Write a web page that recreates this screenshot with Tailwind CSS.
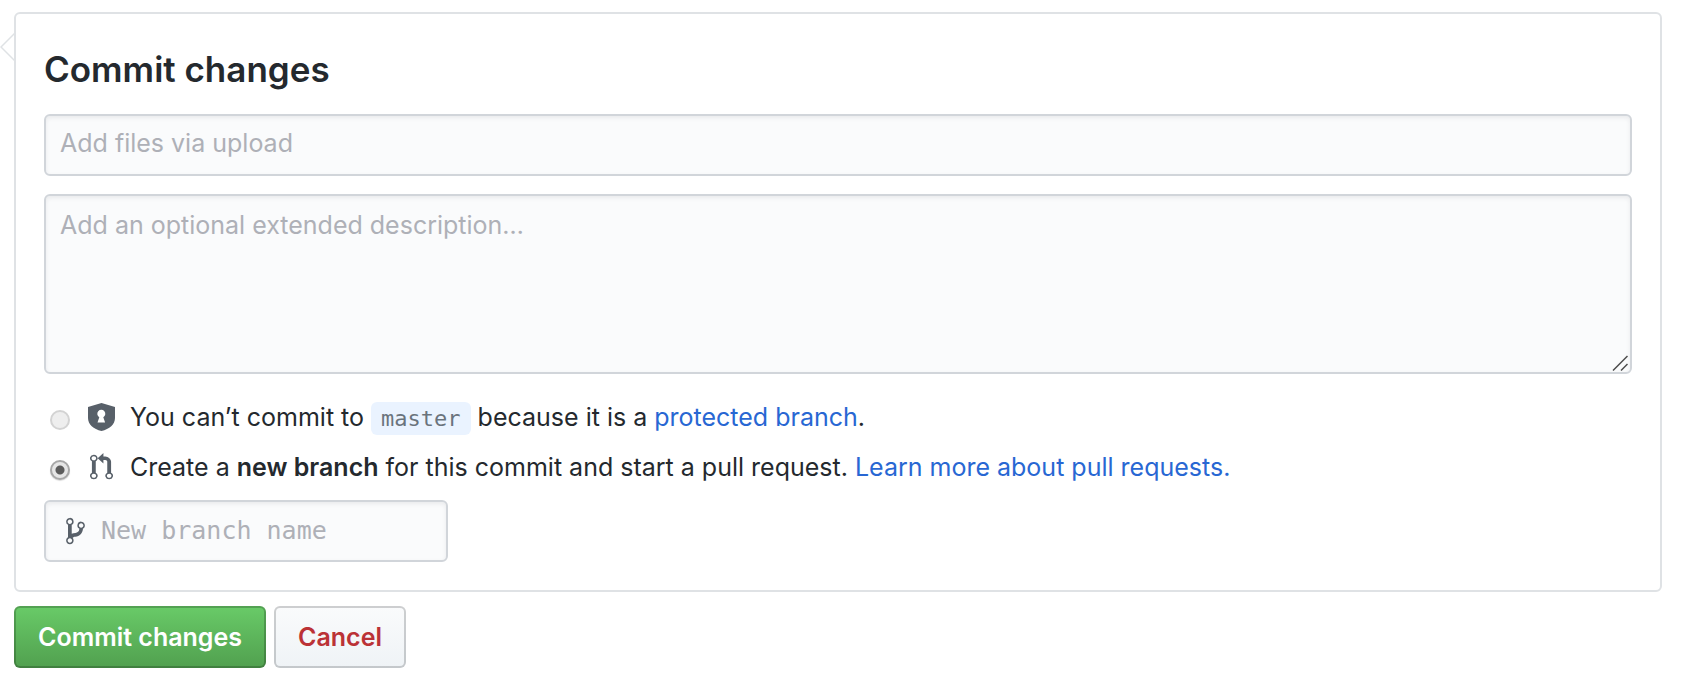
<!DOCTYPE html>
<html lang="en">
<head>
<meta charset="utf-8">
<meta name="viewport" content="width=device-width, initial-scale=1">
<title>Commit changes</title>
<script src="https://cdn.jsdelivr.net/npm/@tailwindcss/browser@4"></script>
</head>
<body class="bg-white font-['Inter',sans-serif] text-[25px] leading-[38px] text-[#24292e]">
<form class="pt-3 pr-5 pb-5 pl-3.5">
  <section class="relative rounded-md border-2 border-[#dfe2e5] px-7 pt-[35px] pb-7">
    <svg class="absolute top-[17px] -left-4 h-[32px] w-4" viewBox="0 0 16 32" fill="none" stroke="#dfe2e5" stroke-width="1.5" aria-hidden="true"><path d="M16 1 1 16l15 15"/></svg>
    <h1 class="mb-[25px] text-[35px] leading-10 font-semibold">Commit changes</h1>
    <input type="text" aria-label="Commit summary" placeholder="Add files via upload" class="block h-[62px] w-full rounded-md border-2 border-[#d1d5da] bg-[#fafbfc] px-3.5 pb-1 shadow-[inset_0_2px_4px_rgba(27,31,35,0.075)] placeholder:text-[#aeb0b7]">
    <div class="relative mt-[18px]">
      <textarea aria-label="Extended description" placeholder="Add an optional extended description…" class="block h-[180px] w-full resize-none rounded-md border-2 border-[#d1d5da] bg-[#fafbfc] px-3.5 py-2.5 shadow-[inset_0_2px_4px_rgba(27,31,35,0.075)] placeholder:text-[#aeb0b7]"></textarea>
      <svg class="absolute right-1 bottom-[3px] h-4 w-4" viewBox="0 0 16 16" fill="none" stroke="#4d4d4d" stroke-width="1.5" aria-hidden="true"><path d="M1 15.500 15.500 1M9 15.500 15.500 9"/></svg>
    </div>
    <div class="mt-[18px] flex h-[50px] items-center">
      <input id="direct" type="radio" name="target" disabled class="mt-1.5 ml-1.5 size-5 shrink-0 appearance-none rounded-full border-2 border-[#d3d3d3] bg-[#eeeeee]">
      <span class="flex w-[60px] shrink-0 justify-center pl-0.5">
        <svg class="h-7 w-[27px]" viewBox="0 0 27 28" aria-hidden="true"><path fill="#586069" fill-rule="evenodd" d="M13.500 0 0 4v11c0 6.500 5.500 11 13.500 13C21.500 26 27 21.500 27 15V4L13.500 0ZM9.500 19.500l1.800-5.300a4 4 0 1 1 4 0l1.800 5.300H9.500Z"/></svg>
      </span>
      <label for="direct">You can’t commit to <code class="rounded-md bg-[#eaf3ff] px-2.5 py-1 font-['DejaVu_Sans_Mono',monospace] text-[22px] leading-7 text-[#6a737d]">master</code> because it is a <a href="#" class="text-[#2867d3]">protected branch</a>.</label>
    </div>
    <div class="flex h-[50px] items-center">
      <input id="branch" type="radio" name="target" checked class="mt-1.5 ml-1.5 size-5 shrink-0 appearance-none rounded-full border-2 border-[#a8a8a8] bg-[#e6e6e6] bg-[radial-gradient(circle,#5c5c5c_4px,transparent_5px)] shadow-[0_1px_1px_rgba(0,0,0,0.15)]">
      <span class="flex w-[60px] shrink-0 justify-center pl-0.5">
        <svg class="h-7 w-[23px]" viewBox="0 0 12 16" preserveAspectRatio="none" fill="#586069" aria-hidden="true"><path d="M11 11.280V5c-.03-.78-.34-1.470-.94-2.060C9.460 2.350 8.780 2.030 8 2H7V0L4 3l3 3V4h1c.27.02.48.11.69.31.21.2.3.42.31.69v6.280A1.993 1.993 0 0 0 10 15a1.993 1.993 0 0 0 1-3.720zm-1 2.920c-.66 0-1.200-.55-1.200-1.200 0-.65.55-1.200 1.200-1.200.65 0 1.200.55 1.200 1.200 0 .65-.55 1.200-1.200 1.200zM4 3c0-1.110-.89-2-2-2a1.993 1.993 0 0 0-1 3.720v6.560A1.993 1.993 0 0 0 2 15a1.993 1.993 0 0 0 1-3.720V4.720c.59-.34 1-.98 1-1.720zm-.8 10c0 .66-.55 1.200-1.200 1.200-.65 0-1.200-.55-1.200-1.200 0-.65.55-1.200 1.200-1.200.65 0 1.200.55 1.200 1.200zM2 4.200C1.340 4.200.8 3.650.8 3c0-.65.55-1.200 1.200-1.200.65 0 1.200.55 1.200 1.200 0 .65-.55 1.200-1.200 1.200z"/></svg>
      </span>
      <label for="branch">Create a <strong class="font-semibold">new branch</strong> for this commit and start a pull request. <a href="#" class="text-[#2867d3]">Learn more about pull requests.</a></label>
    </div>
    <div class="mt-2 flex h-[62px] w-[404px] items-center gap-4 rounded-md border-2 border-[#d1d5da] bg-[#fafbfc] pr-3 pl-5 shadow-[inset_0_2px_4px_rgba(27,31,35,0.075)]">
      <svg class="h-[30px] w-[19px] shrink-0" viewBox="0 0 10 16" fill="#586069" aria-hidden="true"><path d="M10 5c0-1.110-.89-2-2-2a1.993 1.993 0 0 0-1 3.720v.3c-.02.52-.23.98-.63 1.380-.4.4-.86.61-1.380.63-.83.02-1.480.16-2 .45V4.720a1.993 1.993 0 0 0-1-3.720C.88 1 0 1.890 0 3a2 2 0 0 0 1 1.720v6.560c-.59.35-1 .99-1 1.720 0 1.110.89 2 2 2 1.110 0 2-.89 2-2 0-.53-.2-1-.53-1.360.09-.06.48-.41.59-.47.25-.11.56-.17.94-.17 1.050-.05 1.950-.45 2.750-1.250S8.950 7.770 9 6.730h-.02C9.590 6.370 10 5.730 10 5zM2 1.800c.66 0 1.200.55 1.200 1.200 0 .65-.55 1.200-1.200 1.200C1.350 4.200.8 3.650.8 3c0-.65.55-1.200 1.200-1.200zm0 12.410c-.66 0-1.200-.55-1.200-1.200 0-.65.55-1.200 1.200-1.200.65 0 1.200.55 1.200 1.200 0 .65-.55 1.200-1.200 1.200zm6-8c-.66 0-1.200-.55-1.200-1.200 0-.65.55-1.200 1.200-1.200.65 0 1.200.55 1.200 1.200 0 .65-.55 1.200-1.200 1.200z"/></svg>
      <input type="text" aria-label="New branch name" placeholder="New branch name" class="min-w-0 flex-1 bg-transparent font-['DejaVu_Sans_Mono',monospace] text-[25px] outline-none placeholder:text-[#aeb0b7]">
    </div>
  </section>
  <div class="mt-3.5 flex gap-2">
    <button type="button" class="h-[62px] rounded-md border-2 border-black/20 bg-linear-to-b from-[#69cb68] to-[#51a04f] bg-origin-border px-[22px] font-semibold text-white">Commit changes</button>
    <button type="button" class="h-[62px] rounded-md border-2 border-[#1b1f23]/20 bg-linear-to-b from-[#fafbfc] to-[#eff3f6] bg-origin-border px-[22px] font-semibold text-[#bb3236]">Cancel</button>
  </div>
</form>
</body>
</html>
